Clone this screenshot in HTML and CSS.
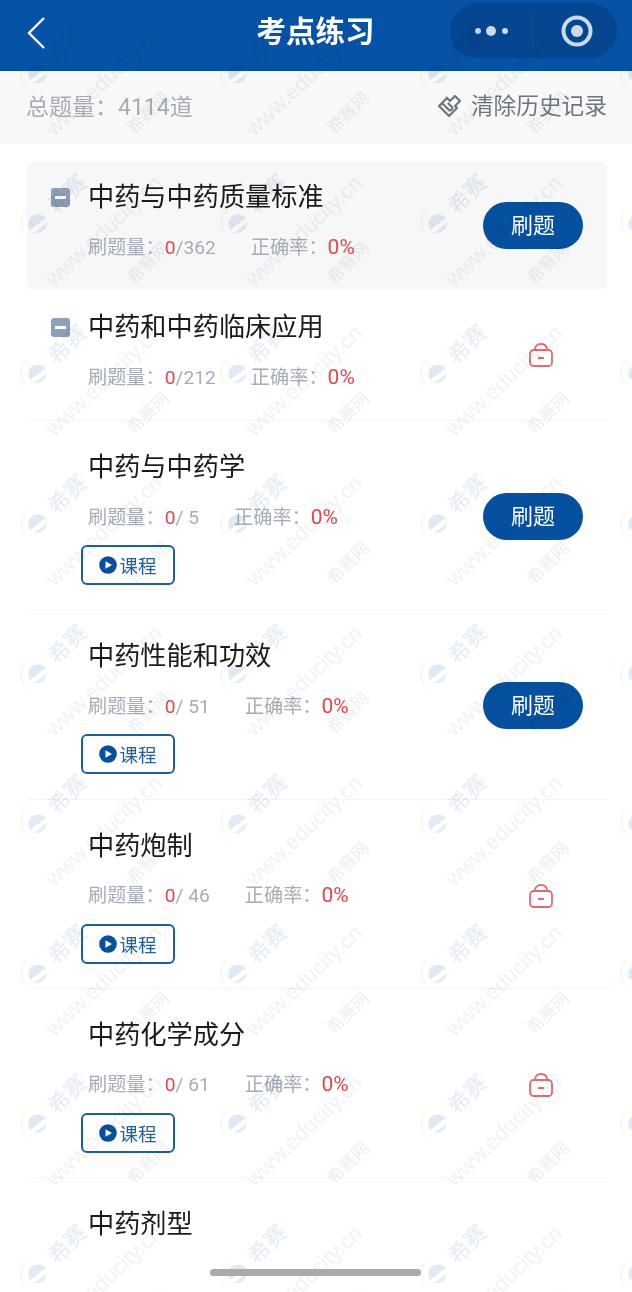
FILE: index.html
```html
<!DOCTYPE html>
<html lang="zh-CN">
<head>
<meta charset="utf-8">
<title>考点练习</title>
<link rel="stylesheet" href="styles.css">
</head>
<body>
<div class="page">
  <header class="nav">
    <svg class="nav-back" width="24" height="36" viewBox="0 0 24 36"><path d="M20 3 L5 18 L20 33" fill="none" stroke="#fff" stroke-width="2.4"/></svg>
    <h1 class="nav-title">考点练习</h1>
    <div class="capsule">
      <div class="capsule-more">
        <svg width="40" height="12" viewBox="0 0 40 12"><circle cx="6" cy="6" r="3" fill="#ccd9e8"/><circle cx="19" cy="6" r="5" fill="#ccd9e8"/><circle cx="33" cy="6" r="3" fill="#ccd9e8"/></svg>
      </div>
      <div class="capsule-close">
        <svg width="32" height="32" viewBox="0 0 32 32"><circle cx="16" cy="16" r="13.5" fill="none" stroke="#ccd9e8" stroke-width="4"/><circle cx="16" cy="16" r="6" fill="#ccd9e8"/></svg>
      </div>
    </div>
  </header>

  <div class="summary">
    <span class="summary-total">总题量：4114道</span>
    <span class="summary-clear">
      <svg width="25" height="26" viewBox="0 0 25 26" fill="none" stroke="#6c7580" stroke-width="2.2" stroke-linejoin="round">
        <path d="M9 5 L13 9 L18 4 L23 9 L18 14 L20 16 L12 24 L2 14 L5 11 L8 14 M5 11 L10 6"/>
        <path d="M11 11 L16 16 M8 14 L13 19 M13 19 L16 16"/>
      </svg>
      清除历史记录
    </span>
  </div>

  <ul class="list">
    <li class="row row-current">
      <div class="row-body">
        <div class="row-head"><span class="mark"></span><span class="row-name">中药与中药质量标准</span></div>
        <p class="stats"><span>刷题量：<b>0</b>/362</span><span>正确率：<b class="rate">0%</b></span></p>
      </div>
      <a class="practice">刷题</a>
    </li>
    <li class="row row-compact">
      <div class="row-body">
        <div class="row-head"><span class="mark"></span><span class="row-name">中药和中药临床应用</span></div>
        <p class="stats"><span>刷题量：<b>0</b>/212</span><span>正确率：<b class="rate">0%</b></span></p>
      </div>
      <svg class="lock" width="26" height="26" viewBox="0 0 26 26" fill="none" stroke="#e8696d" stroke-width="1.8"><rect x="2" y="8" width="22" height="16" rx="3.5"/><path d="M7 8 C7 4 9.5 2 13 2 C16.5 2 19 4 19 8"/><path d="M10 16 H16" stroke-width="2"/></svg>
    </li>
    <li class="row">
      <div class="row-body">
        <div class="row-head"><span class="mark-space"></span><span class="row-name">中药与中药学</span></div>
        <p class="stats"><span>刷题量：<b>0</b>/ 5</span><span>正确率：<b class="rate">0%</b></span></p>
        <a class="course"><svg width="18" height="18" viewBox="0 0 18 18"><circle cx="9" cy="9" r="8.8" fill="#05509f"/><path d="M6.5 5.2 L13 9 L6.5 12.8 Z" fill="#fff"/></svg>课程</a>
      </div>
      <a class="practice">刷题</a>
    </li>
    <li class="row">
      <div class="row-body">
        <div class="row-head"><span class="mark-space"></span><span class="row-name">中药性能和功效</span></div>
        <p class="stats"><span>刷题量：<b>0</b>/ 51</span><span>正确率：<b class="rate">0%</b></span></p>
        <a class="course"><svg width="18" height="18" viewBox="0 0 18 18"><circle cx="9" cy="9" r="8.8" fill="#05509f"/><path d="M6.5 5.2 L13 9 L6.5 12.8 Z" fill="#fff"/></svg>课程</a>
      </div>
      <a class="practice">刷题</a>
    </li>
    <li class="row">
      <div class="row-body">
        <div class="row-head"><span class="mark-space"></span><span class="row-name">中药炮制</span></div>
        <p class="stats"><span>刷题量：<b>0</b>/ 46</span><span>正确率：<b class="rate">0%</b></span></p>
        <a class="course"><svg width="18" height="18" viewBox="0 0 18 18"><circle cx="9" cy="9" r="8.8" fill="#05509f"/><path d="M6.5 5.2 L13 9 L6.5 12.8 Z" fill="#fff"/></svg>课程</a>
      </div>
      <svg class="lock" width="26" height="26" viewBox="0 0 26 26" fill="none" stroke="#e8696d" stroke-width="1.8"><rect x="2" y="8" width="22" height="16" rx="3.5"/><path d="M7 8 C7 4 9.5 2 13 2 C16.5 2 19 4 19 8"/><path d="M10 16 H16" stroke-width="2"/></svg>
    </li>
    <li class="row">
      <div class="row-body">
        <div class="row-head"><span class="mark-space"></span><span class="row-name">中药化学成分</span></div>
        <p class="stats"><span>刷题量：<b>0</b>/ 61</span><span>正确率：<b class="rate">0%</b></span></p>
        <a class="course"><svg width="18" height="18" viewBox="0 0 18 18"><circle cx="9" cy="9" r="8.8" fill="#05509f"/><path d="M6.5 5.2 L13 9 L6.5 12.8 Z" fill="#fff"/></svg>课程</a>
      </div>
      <svg class="lock" width="26" height="26" viewBox="0 0 26 26" fill="none" stroke="#e8696d" stroke-width="1.8"><rect x="2" y="8" width="22" height="16" rx="3.5"/><path d="M7 8 C7 4 9.5 2 13 2 C16.5 2 19 4 19 8"/><path d="M10 16 H16" stroke-width="2"/></svg>
    </li>
    <li class="row row-last">
      <div class="row-body">
        <div class="row-head"><span class="mark-space"></span><span class="row-name">中药剂型</span></div>
      </div>
    </li>
  </ul>

  <!-- repeating site mark laid over the whole page -->
  <svg class="watermark" width="632" height="1292">
    <defs>
      <pattern id="site-mark" patternUnits="userSpaceOnUse" width="200" height="150">
        <path d="M25 84 A16 16 0 0 1 28 60" fill="none" stroke="#fcf9e9" stroke-width="2"/>
        <path d="M31 67 A11 11 0 0 1 46 68 L30 80 A11 11 0 0 1 31 67 Z" fill="#e0eaf4"/>
        <path d="M34 83 L47 73 A11 11 0 0 1 34 83 Z" fill="#e4edf6"/>
        <text class="wm-brand" transform="translate(67 44) rotate(-45)" text-anchor="middle" dy="8">希赛</text>
        <text class="wm-url" transform="translate(104 81) rotate(-43)" text-anchor="middle" dy="7">www.educity.cn</text>
        <text class="wm-name" transform="translate(148 113) rotate(-45)" text-anchor="middle" dy="6">希赛网</text>
      </pattern>
    </defs>
    <rect width="632" height="1292" fill="url(#site-mark)"/>
  </svg>

  <div class="home-bar"></div>
</div>
</body>
</html>
```

FILE: styles.css
```css
* { box-sizing: border-box; }

html, body { margin: 0; padding: 0; }

body {
  width: 632px;
  height: 1292px;
  overflow: hidden;
  background: #fff;
  font-family: Roboto, "Noto Sans CJK SC", sans-serif;
}

.page {
  position: relative;
  width: 632px;
  height: 1292px;
  overflow: hidden;
}

/* top bar */
.nav {
  position: relative;
  height: 71px;
  background: #0652a6;
  display: flex;
  align-items: flex-start;
  padding: 3px 15px 0 24px;
}

.nav-back {
  flex: none;
  margin-top: 12px;
}

.nav-title {
  position: absolute;
  left: 0;
  right: 0;
  top: 12px;
  margin: 0;
  text-align: center;
  color: #fff;
  font-size: 29.5px;
  line-height: 40px;
  font-weight: 700;
  padding-right: 1px;
}

.capsule {
  margin-left: auto;
  width: 167px;
  height: 55px;
  border-radius: 28px;
  background: #04468f;
  display: flex;
  align-items: center;
}

.capsule-more {
  width: 83px;
  height: 36px;
  display: flex;
  align-items: center;
  padding-left: 22px;
  border-right: 1px solid #11508f;
}

.capsule-close {
  flex: 1;
  display: flex;
  justify-content: center;
  padding-left: 4px;
}

/* totals strip */
.summary {
  height: 73px;
  background: #f8f8f8;
  display: flex;
  align-items: center;
  justify-content: space-between;
  padding: 0 25px 6px 26px;
  font-size: 22.7px;
}

.summary-total {
  color: #a6adb7;
  font-size: 23px;
}

.summary-clear {
  display: flex;
  align-items: center;
  gap: 9px;
  color: #6c7580;
}

/* chapter list */
.list {
  list-style: none;
  margin: 0 25px 0 27px;
  padding: 17px 0 0;
}

.row {
  display: flex;
  align-items: center;
  justify-content: space-between;
  padding: 28px 24px 24.25px;
  border-bottom: 1px solid #f3f4f5;
}

.row-current {
  padding-top: 18px;
  padding-bottom: 27.5px;
  margin-bottom: 1px;
  border-bottom: 0;
  border-radius: 8px;
  background: #f7f7f8;
}

.row-compact {
  padding-top: 18px;
  padding-bottom: 27.5px;
}

.row-last { border-bottom: 0; }

.row-head {
  display: flex;
  align-items: center;
  height: 36px;
}

.mark, .mark-space {
  flex: none;
  width: 19px;
  height: 19px;
  margin-right: 18px;
}

.mark {
  position: relative;
  border-radius: 3px;
  background: #8f9fb7;
}

.mark::after {
  content: "";
  position: absolute;
  left: 4px;
  right: 4px;
  top: 8px;
  height: 3px;
  background: #fff;
}

.row-name {
  color: #1a1a1a;
  font-size: 26.2px;
  line-height: 36px;
}

.stats {
  display: flex;
  gap: 35px;
  height: 30px;
  margin: 17.5px 0 0 37px;
  color: #a6adb8;
  font-size: 19.2px;
  line-height: 30px;
}

.stats b {
  font-weight: 400;
  color: #e4474c;
}

.stats .rate {
  font-size: 21px;
  line-height: 1;
}

.course {
  margin: 12.5px 0 0 30px;
  width: 94px;
  height: 40px;
  display: flex;
  align-items: center;
  justify-content: center;
  gap: 2px;
  border: 2px solid #1b5f9f;
  border-radius: 6px;
  color: #23609c;
  font-size: 18.5px;
}

.practice {
  flex: none;
  width: 100px;
  height: 47px;
  margin-bottom: 2px;
  padding-bottom: 5px;
  display: flex;
  align-items: center;
  justify-content: center;
  border-radius: 24px;
  background: #05509f;
  color: #fff;
  font-size: 22px;
}

.lock {
  flex: none;
  margin-right: 29px;
}

.row-current .practice {
  margin-top: 10px;
  margin-bottom: 0;
}

.row-compact .lock { margin-top: 8px; }

/* overlays */
.watermark {
  position: absolute;
  left: 0;
  top: 0;
  pointer-events: none;
  mix-blend-mode: multiply;
}

.wm-brand {
  font-size: 22px;
  font-family: "Noto Sans CJK SC", sans-serif;
  fill: #e3ebf4;
}

.wm-url {
  font-size: 22px;
  font-family: "Liberation Sans", sans-serif;
  fill: #f0f2f4;
}

.wm-name {
  font-size: 17px;
  font-family: "Noto Sans CJK SC", sans-serif;
  fill: #eceef1;
}

.home-bar {
  position: absolute;
  left: 210px;
  top: 1269px;
  width: 211px;
  height: 7px;
  border-radius: 4px;
  background: #aaa;
}
```
